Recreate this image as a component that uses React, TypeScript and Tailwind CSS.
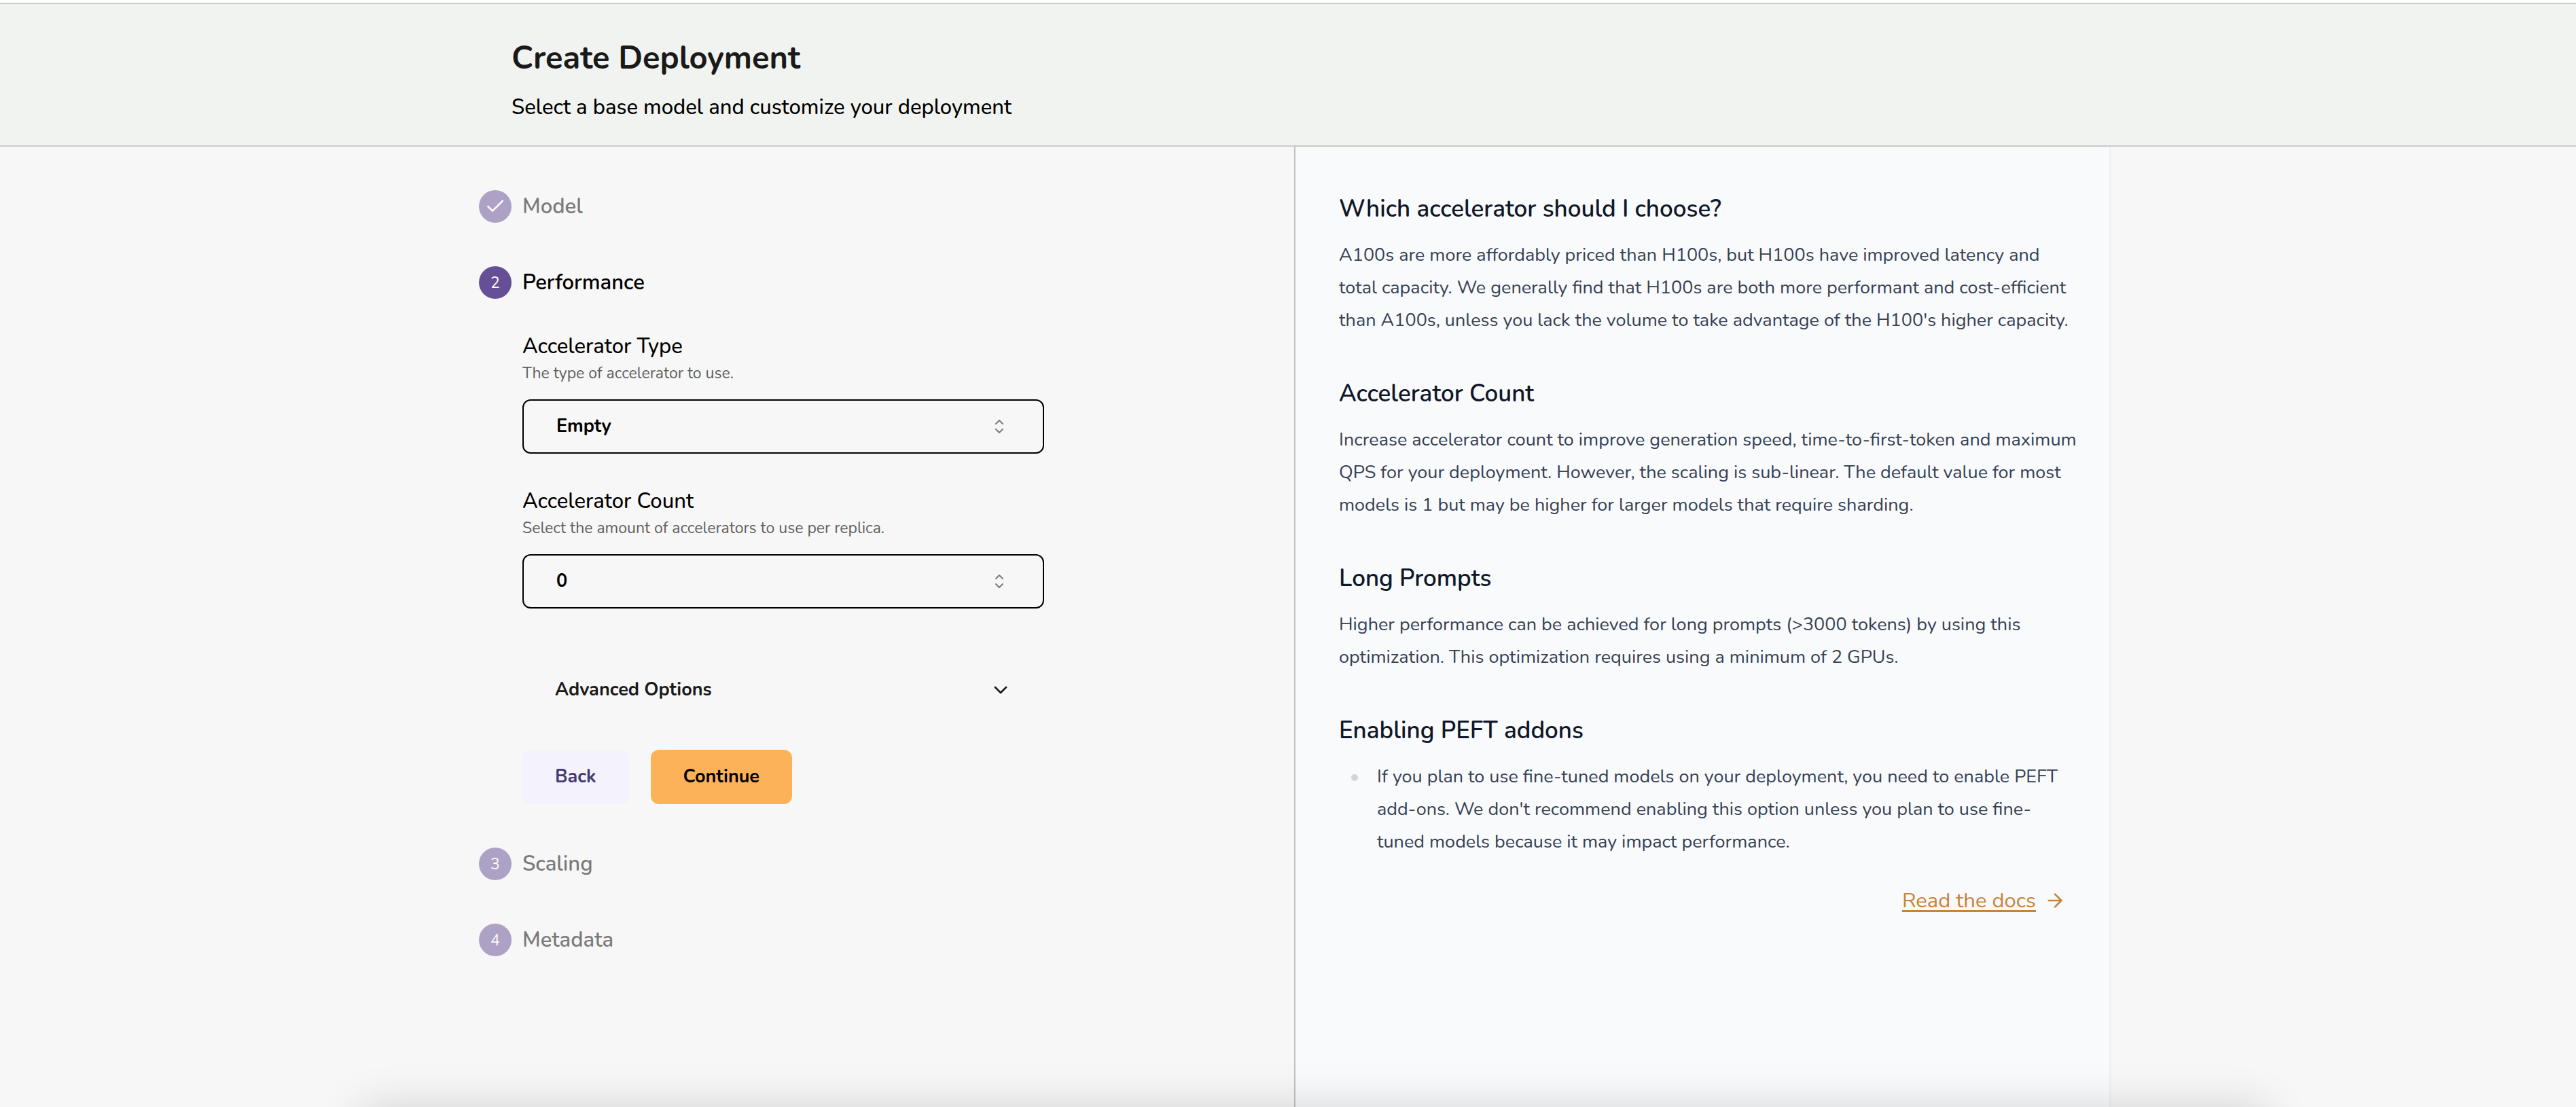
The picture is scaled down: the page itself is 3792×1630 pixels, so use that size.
import { useState } from "react";
import type { ReactNode } from "react";
import { ArrowRight, Check, ChevronDown } from "lucide-react";

function Step({ badge, title, active = false }: { badge: ReactNode; title: string; active?: boolean }) {
  return (
    <div className={active ? "flex items-center gap-4" : "flex items-center gap-4 opacity-50"}>
      <span className="flex size-12 shrink-0 items-center justify-center rounded-full bg-[#654f96] text-[23px] leading-none text-white">
        {badge}
      </span>
      <h2 className="text-[31px] leading-[44px] font-semibold">{title}</h2>
    </div>
  );
}

function SelectField({
  id,
  label,
  hint,
  options,
}: {
  id: string;
  label: string;
  hint: string;
  options: string[];
}) {
  const [value, setValue] = useState(options[0]);
  return (
    <div>
      <label htmlFor={id} className="block text-[31px] leading-[44px] font-medium">
        {label}
      </label>
      <p id={`${id}-hint`} className="text-[23px] leading-9 text-[#5f5f5f]">
        {hint}
      </p>
      <div className="mt-5 grid items-center">
        <select
          id={id}
          aria-describedby={`${id}-hint`}
          value={value}
          onChange={(e) => setValue(e.target.value)}
          className="col-start-1 row-start-1 h-20 w-full appearance-none rounded-xl border-2 border-black bg-transparent px-12 text-[27px] font-bold"
        >
          {options.map((o) => (
            <option key={o}>{o}</option>
          ))}
        </select>
        <svg
          viewBox="0 0 24 24"
          fill="none"
          stroke="currentColor"
          strokeWidth="1.5"
          strokeLinecap="round"
          strokeLinejoin="round"
          aria-hidden="true"
          className="pointer-events-none col-start-1 row-start-1 mr-[50px] size-8 justify-self-end text-[#7b7b7b]"
        >
          <path d="M8.25 15 12 18.75 15.75 15m-7.5-6L12 5.25 15.75 9" />
        </svg>
      </div>
    </div>
  );
}

function HelpSection({ title, children }: { title: string; children: ReactNode }) {
  return (
    <section>
      <h3 className="text-[35px] leading-[56px] font-semibold text-gray-900">{title}</h3>
      <div className="mt-4 text-[27px] leading-[48px] text-gray-700">{children}</div>
    </section>
  );
}

export default function App() {
  return (
    <div className="relative flex min-h-screen flex-col overflow-hidden bg-[#f7f7f7] font-['Nunito','Nunito_Sans','Lato',sans-serif] text-black">
      <header className="border-t-4 border-white">
        <div className="border-y-2 border-[#cccccc] bg-[#f1f3f0]">
          <div className="mx-auto flex max-w-[2418px] flex-col gap-6 pt-13 pb-9 pl-[66px]">
            <h1 className="text-[47px] leading-[56px] font-bold text-[#1a1a1a]">Create Deployment</h1>
            <p className="text-[31px] leading-10 font-medium">Select a base model and customize your deployment</p>
          </div>
        </div>
      </header>

      <main className="mx-auto grid w-full max-w-[2418px] grow grid-cols-[1218fr_1200fr]">
        <div className="flex flex-col gap-16 py-16 pl-[18px]">
          <Step badge={<Check className="size-8" aria-label="Completed" />} title="Model" />

          <section>
            <Step badge="2" title="Performance" active />
            <form
              className="mt-12 ml-16 flex max-w-[768px] flex-col gap-12"
              onSubmit={(e) => e.preventDefault()}
            >
              <SelectField
                id="accelerator-type"
                label="Accelerator Type"
                hint="The type of accelerator to use."
                options={["Empty"]}
              />
              <SelectField
                id="accelerator-count"
                label="Accelerator Count"
                hint="Select the amount of accelerators to use per replica."
                options={["0"]}
              />
              <button
                type="button"
                aria-expanded="false"
                className="mt-8 flex h-20 items-center justify-between px-12 text-[27px] font-bold text-[#1a1a1a]"
              >
                Advanced Options
                <ChevronDown className="size-8" aria-hidden="true" />
              </button>
              <div className="flex gap-8">
                <button type="button" className="h-20 rounded-xl bg-[#f4f2fd] px-12 text-[27px] font-bold text-[#443d70]">
                  Back
                </button>
                <button type="submit" className="h-20 rounded-xl bg-[#fcb258] px-12 text-[27px] font-bold">
                  Continue
                </button>
              </div>
            </form>
          </section>

          <Step badge="3" title="Scaling" />
          <Step badge="4" title="Metadata" />
        </div>

        <aside className="flex flex-col gap-14 border-l-2 border-[#bfc1c7] bg-[#f9fafc] pt-16 pr-10 pl-16 shadow-[1px_0_4px_rgba(0,0,0,0.05)]">
          <HelpSection title="Which accelerator should I choose?">
            <p>
              A100s are more affordably priced than H100s, but H100s have improved latency and total capacity. We
              generally find that H100s are both more performant and cost-efficient than A100s, unless you lack the
              volume to take advantage of the H100's higher capacity.
            </p>
          </HelpSection>
          <HelpSection title="Accelerator Count">
            <p>
              Increase accelerator count to improve generation speed, time-to-first-token and maximum QPS for your
              deployment. However, the scaling is sub-linear. The default value for most models is 1 but may be higher
              for larger models that require sharding.
            </p>
          </HelpSection>
          <HelpSection title="Long Prompts">
            <p>
              Higher performance can be achieved for long prompts (&gt;3000 tokens) by using this
              <br />
              optimization. This optimization requires using a minimum of 2 GPUs.
            </p>
          </HelpSection>
          <div className="mr-6">
            <HelpSection title="Enabling PEFT addons">
              <ul>
                <li className="flex gap-7 pl-[18px]">
                  <span className="mt-5 size-2.5 shrink-0 rounded-full bg-gray-300" aria-hidden="true" />
                  <span>
                    If you plan to use fine-tuned models on your deployment, you need to enable PEFT add-ons. We don't
                    recommend enabling this option unless you plan to use fine-tuned models because it may impact
                    performance.
                  </span>
                </li>
              </ul>
            </HelpSection>
            <a href="#docs" className="mt-10 flex items-center justify-end gap-3 text-[31px] leading-[44px] text-[#c98339]">
              <span className="underline decoration-[3px] underline-offset-4">Read the docs</span>
              <ArrowRight className="size-8" aria-hidden="true" />
            </a>
          </div>
        </aside>
      </main>

      <div
        aria-hidden="true"
        className="pointer-events-none absolute top-full right-[12%] left-[14%] h-20 shadow-[0_0_64px_rgba(0,0,0,0.15)]"
      />
    </div>
  );
}
